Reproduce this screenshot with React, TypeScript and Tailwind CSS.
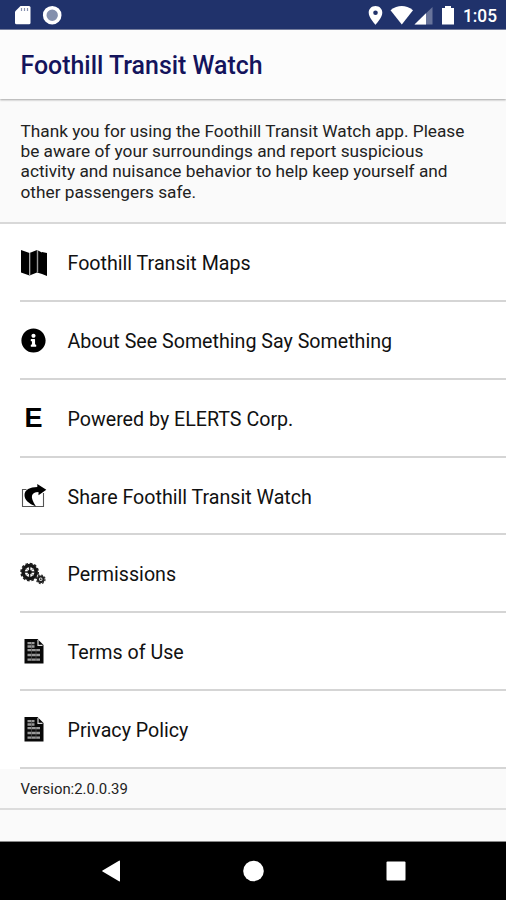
import type { ReactNode } from "react";
import { FaInfoCircle } from "react-icons/fa";

function MapIcon() {
  return (
    <svg width="26" height="26" viewBox="0 0 26 26">
      <path d="M0 0l8.500 3v22.500L0 22.500zM8.500 3L16 0v22.500l-7.500 3zM16 0l5 2.500V24l-5-1.500zM21 2l5 1v23l-5-2z" fill="#000" />
      <path d="M8.700 3v22.500" stroke="#bbb" strokeWidth="1.200" />
      <path d="M16.500 0v22.500" stroke="#999" strokeWidth="1.400" />
    </svg>
  );
}

function ShareIcon() {
  return (
    <svg className="mb-[2px]" width="26" height="26" viewBox="0 0 26 26" fill="none">
      <path d="M5.500 6.500H1.500v17h21V10" stroke="#555" strokeWidth="1.100" />
      <path d="M16.300 1l9 5.700-7.800 5.500V9C10 9.500 8.500 13.500 15 23.500 7.500 20.500 3.500 17 3.500 12 3.500 6.700 9 4 16.300 4z" fill="#000" />
    </svg>
  );
}

function GearsIcon() {
  return (
    <svg width="28" height="26" viewBox="0 0 28 26" fill="none">
      <circle cx="10" cy="11" r="6.800" stroke="#151515" strokeWidth="3.600" />
      <circle cx="10" cy="11" r="8.800" stroke="#222" strokeWidth="1.800" strokeDasharray="2.700 1.900" />
      <path d="M10 5v12M4 11h12" stroke="#222" strokeWidth="1.500" />
      <path d="M6 7l8 8M14 7l-8 8" stroke="#777" strokeWidth="1" />
      <circle cx="10" cy="11" r="2.200" fill="#111" />
      <circle cx="21.500" cy="18.500" r="2.900" stroke="#222" strokeWidth="2.200" />
      <circle cx="21.500" cy="18.500" r="4.400" stroke="#333" strokeWidth="1.400" strokeDasharray="1.800 1.650" />
      <circle cx="21.500" cy="18.500" r="1" fill="#333" />
    </svg>
  );
}

function DocumentIcon() {
  return (
    <svg className="mb-[2px]" width="20" height="25" viewBox="0 0 20 25">
      <path d="M.5 0h13L19.500 6v18.500H.5z" fill="#080808" />
      <path d="M14 1v5.300h4.500" fill="none" stroke="#ddd" strokeWidth="1.200" />
      <path d="M3.500 4.200h7M3.500 7.500h7M3.500 11.200H16M3.500 16H16M3.500 20.700H16" stroke="#999" strokeWidth="2.300" />
      <path d="M7.500 3v19M12 10v12" stroke="#555" strokeWidth="0.700" />
    </svg>
  );
}

const items: { label: string; icon: ReactNode }[] = [
  { label: "Foothill Transit Maps", icon: <MapIcon /> },
  { label: "About See Something Say Something", icon: <FaInfoCircle size={25} /> },
  {
    label: "Powered by ELERTS Corp.",
    icon: <span className="font-['Liberation_Sans',sans-serif] text-[27px] font-bold leading-none">E</span>,
  },
  { label: "Share Foothill Transit Watch", icon: <ShareIcon /> },
  { label: "Permissions", icon: <GearsIcon /> },
  { label: "Terms of Use", icon: <DocumentIcon /> },
  { label: "Privacy Policy", icon: <DocumentIcon /> },
];

function StatusBar() {
  return (
    <div className="flex h-[30px] items-center border-b border-[#7880a0] bg-[#20326b] text-white">
      <svg width="506" height="29" viewBox="0 0 506 29">
        <path d="M20.500 6H29q1.500 0 1.500 1.500v15.300q0 1.500-1.500 1.500H16.500q-1.500 0-1.500-1.500V11.500z" fill="#fff" />
        <path d="M21.500 8v3M24.500 8v3M27.500 8v3" stroke="#8791b0" strokeWidth="1.200" />
        <circle cx="52.200" cy="15.200" r="7.500" fill="#8490ad" stroke="#fff" strokeWidth="3.600" />
        <path d="M375.500 6c-4 0-6.800 2.900-6.800 6.700 0 4.900 6.800 12 6.800 12s6.800-7.100 6.800-12c0-3.800-2.800-6.700-6.800-6.700zm0 4.400a2.300 2.300 0 110 4.600 2.300 2.300 0 010-4.600z" fill="#fff" fillRule="evenodd" />
        <path d="M390.500 10.200Q401.800 2 413 10.200L401.800 24.500z" fill="#fff" />
        <path d="M432.500 7v17.500h-18z" fill="#68749b" />
        <path d="M426 13.300v11.200h-11.500z" fill="#fff" />
        <path d="M445 6h6v2h3v16.500h-12V8h3z" fill="#fff" />
        <text x="463" y="22.300" fill="#fff" fontFamily="Roboto, sans-serif" fontSize="18.500" fontWeight="500" textLength="34" lengthAdjust="spacingAndGlyphs">1:05</text>
      </svg>
    </div>
  );
}

export default function App() {
  return (
    <div className="flex h-[900px] w-[506px] flex-col overflow-hidden bg-[#fafafa] font-['Roboto',sans-serif] text-[#111]">
      <StatusBar />
      <header className="z-10 flex h-[69px] items-center bg-[#fcfcfc] pl-[20.500px] pt-[3px] shadow-[0_1px_2px_rgba(0,0,0,0.35)]">
        <h1 className="text-[24.900px] font-medium text-[#14145c]">Foothill Transit Watch</h1>
      </header>
      <p className="h-[125px] whitespace-nowrap border-b-2 border-[#d8d8d8] pl-[20.500px] pt-[22px] text-[17.250px] leading-[20.200px] text-[#222]">
        Thank you for using the Foothill Transit Watch app. Please<br />
        be aware of your surroundings and report suspicious<br />
        activity and nuisance behavior to help keep yourself and<br />
        other passengers safe.
      </p>
      <ul className="bg-white pl-5">
        {items.map((item) => (
          <li key={item.label} className="flex h-[77.860px] items-center border-b-2 border-[#d5d5d5] pt-[2px]">
            <span className="flex w-[27px] shrink-0 justify-center text-black">{item.icon}</span>
            <span className="ml-[20.500px] whitespace-nowrap pt-[2px] text-[19.650px] leading-6">{item.label}</span>
          </li>
        ))}
      </ul>
      <p className="flex h-[41px] items-center border-b-2 border-[#dcdcdc] pl-[20.500px] pt-[2px] text-[14.900px] text-[#222]">Version:2.0.0.39</p>
      <div className="grow border-b border-[#888]" />
      <nav className="flex h-[58px] items-center justify-center bg-black">
        <svg width="506" height="58" viewBox="0 0 506 58" fill="#fff">
          <path d="M102.500 28.500L119 18.700q1-.5 1 .5v19.600q0 1-1 .5L102.500 29.500q-.7-.5 0-1z" />
          <circle cx="253.500" cy="29" r="10.300" />
          <rect x="386.500" y="19.500" width="19" height="19" rx="1" />
        </svg>
      </nav>
    </div>
  );
}
